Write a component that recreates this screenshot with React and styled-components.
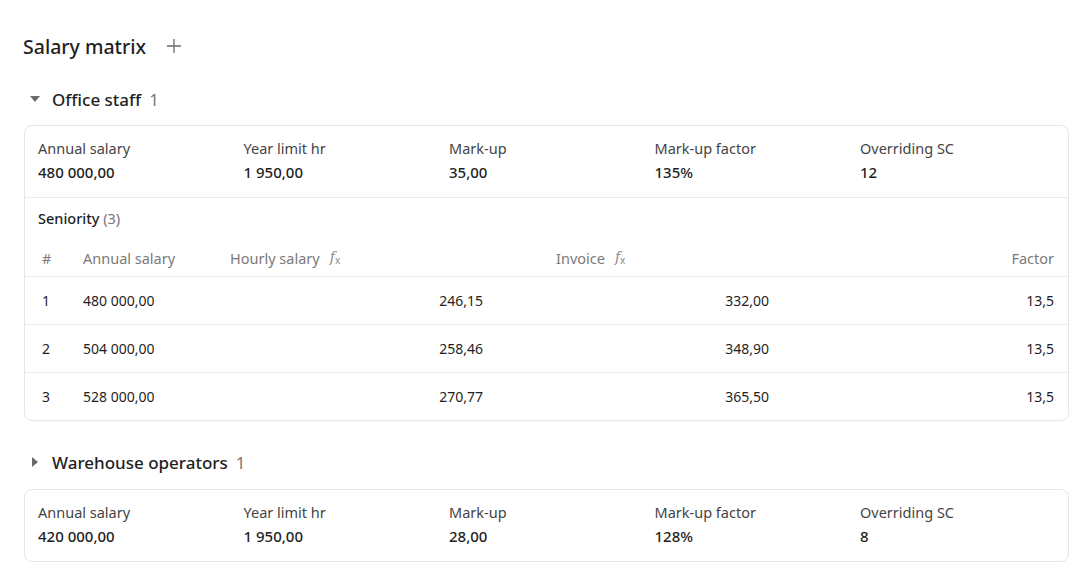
import React from "react";
import styled, { createGlobalStyle } from "styled-components";

const GlobalStyle = createGlobalStyle`
  body {
    margin: 0;
    background: #fff;
    font-family: "Noto Sans", "Open Sans", sans-serif;
    color: #1f1f1f;
  }
`;

const Page = styled.div`
  padding: 30px 14px 0 23px;
`;

const TitleRow = styled.div`
  display: flex;
  align-items: center;
  gap: 20px;
  height: 32px;
`;

const Title = styled.h1`
  margin: 0;
  font-size: 19.5px;
  font-weight: 500;
  color: #1f1f1f;
`;

const AddButton = styled.button`
  border: none;
  background: none;
  padding: 0;
  display: flex;
  color: #6b6b6b;
  cursor: pointer;
`;

const Group = styled.section`
  margin-top: ${(p) => p.$top}px;
`;

const GroupHeader = styled.div`
  display: flex;
  align-items: center;
  height: 24px;
  padding-left: 7px;
  margin-bottom: ${(p) => (p.$open ? 14 : 15)}px;
`;

const Caret = styled.span`
  width: 0;
  height: 0;
  margin-right: 12px;
  ${(p) =>
    p.$open
      ? `border-left: 5px solid transparent;
         border-right: 5px solid transparent;
         border-top: 6px solid #6b6b6b;`
      : `border-top: 5px solid transparent;
         border-bottom: 5px solid transparent;
         border-left: 6px solid #6b6b6b;
         margin-left: 2px;
         margin-right: 14px;`}
`;

const GroupName = styled.span`
  font-size: 17px;
  font-weight: 500;
`;

const Count = styled.span`
  font-size: 17px;
  color: #777;
  margin-left: 8px;
`;

const Card = styled.div`
  margin-left: 1px;
  border: 1px solid #e6e6e6;
  border-radius: 8px;
  background: #fff;
  overflow: hidden;
`;

const Summary = styled.div`
  display: grid;
  grid-template-columns: repeat(5, 205.5px);
  padding: 11px 0 12px 13px;
`;

const Stat = styled.div`
  display: flex;
  flex-direction: column;
`;

const StatLabel = styled.span`
  font-size: 14.5px;
  line-height: 22px;
  color: #444;
`;

const StatValue = styled.span`
  font-size: 15px;
  line-height: 26px;
  font-weight: 500;
  color: #1f1f1f;
`;

const Seniority = styled.div`
  border-top: 1px solid #ececec;
`;

const SectionTitle = styled.div`
  padding: 10px 13px 0;
  font-size: 14.5px;
  line-height: 20px;
  font-weight: 500;

  span {
    font-weight: 400;
    color: #777;
  }
`;

const Row = styled.div`
  display: grid;
  grid-template-columns: 41px 147px 326px 326px 1fr;
  align-items: center;
  padding: 0 14px 0 17px;
  height: ${(p) => (p.$head ? 37 : 47)}px;
  font-size: ${(p) => (p.$head ? 14.5 : 14)}px;
  color: ${(p) => (p.$head ? "#7a7a7a" : "#1f1f1f")};
  border-bottom: ${(p) => (p.$last ? "none" : "1px solid #ececec")};
  margin-top: ${(p) => (p.$head ? 11 : 0)}px;
`;

const Cell = styled.div`
  display: flex;
  align-items: center;
  justify-content: ${(p) => (p.$right ? "flex-end" : "flex-start")};
  padding-right: ${(p) => p.$pr || 0}px;
  white-space: nowrap;
`;

const Fx = styled.span`
  margin-left: 10px;
  font-family: "DejaVu Serif", "Liberation Serif", serif;
  font-style: italic;
  font-size: 14px;
  color: #8a8a8a;

  sub {
    font-size: 10px;
    font-style: normal;
    font-family: "Noto Sans", sans-serif;
    vertical-align: -2px;
  }
`;

const PlusIcon = () => (
  <svg width="16" height="16" viewBox="0 0 16 16" fill="none">
    <path d="M8 1v14M1 8h14" stroke="currentColor" strokeWidth="1.3" />
  </svg>
);

const FxMark = () => (
  <Fx>
    f<sub>x</sub>
  </Fx>
);

const groups = [
  {
    name: "Office staff",
    count: 1,
    open: true,
    stats: ["480 000,00", "1 950,00", "35,00", "135%", "12"],
    rows: [
      ["1", "480 000,00", "246,15", "332,00", "13,5"],
      ["2", "504 000,00", "258,46", "348,90", "13,5"],
      ["3", "528 000,00", "270,77", "365,50", "13,5"],
    ],
  },
  {
    name: "Warehouse operators",
    count: 1,
    open: false,
    stats: ["420 000,00", "1 950,00", "28,00", "128%", "8"],
    rows: [],
  },
];

const statLabels = [
  "Annual salary",
  "Year limit hr",
  "Mark-up",
  "Mark-up factor",
  "Overriding SC",
];

const SalaryGroup = ({ group, top }) => (
  <Group $top={top}>
    <GroupHeader $open={group.open}>
      <Caret $open={group.open} />
      <GroupName>{group.name}</GroupName>
      <Count>{group.count}</Count>
    </GroupHeader>
    <Card>
      <Summary>
        {statLabels.map((label, i) => (
          <Stat key={label}>
            <StatLabel>{label}</StatLabel>
            <StatValue>{group.stats[i]}</StatValue>
          </Stat>
        ))}
      </Summary>
      {group.open && (
        <Seniority>
          <SectionTitle>
            Seniority <span>({group.rows.length})</span>
          </SectionTitle>
          <Row $head>
            <Cell>#</Cell>
            <Cell>Annual salary</Cell>
            <Cell>
              Hourly salary <FxMark />
            </Cell>
            <Cell>
              Invoice <FxMark />
            </Cell>
            <Cell $right>Factor</Cell>
          </Row>
          {group.rows.map((r, i) => (
            <Row key={r[0]} $last={i === group.rows.length - 1}>
              <Cell>{r[0]}</Cell>
              <Cell>{r[1]}</Cell>
              <Cell $right $pr={73}>
                {r[2]}
              </Cell>
              <Cell $right $pr={113}>
                {r[3]}
              </Cell>
              <Cell $right>{r[4]}</Cell>
            </Row>
          ))}
        </Seniority>
      )}
    </Card>
  </Group>
);

export default function App() {
  return (
    <>
      <GlobalStyle />
      <Page>
        <TitleRow>
          <Title>Salary matrix</Title>
          <AddButton aria-label="Add">
            <PlusIcon />
          </AddButton>
        </TitleRow>
        <SalaryGroup group={groups[0]} top={25} />
        <SalaryGroup group={groups[1]} top={29} />
      </Page>
    </>
  );
}
